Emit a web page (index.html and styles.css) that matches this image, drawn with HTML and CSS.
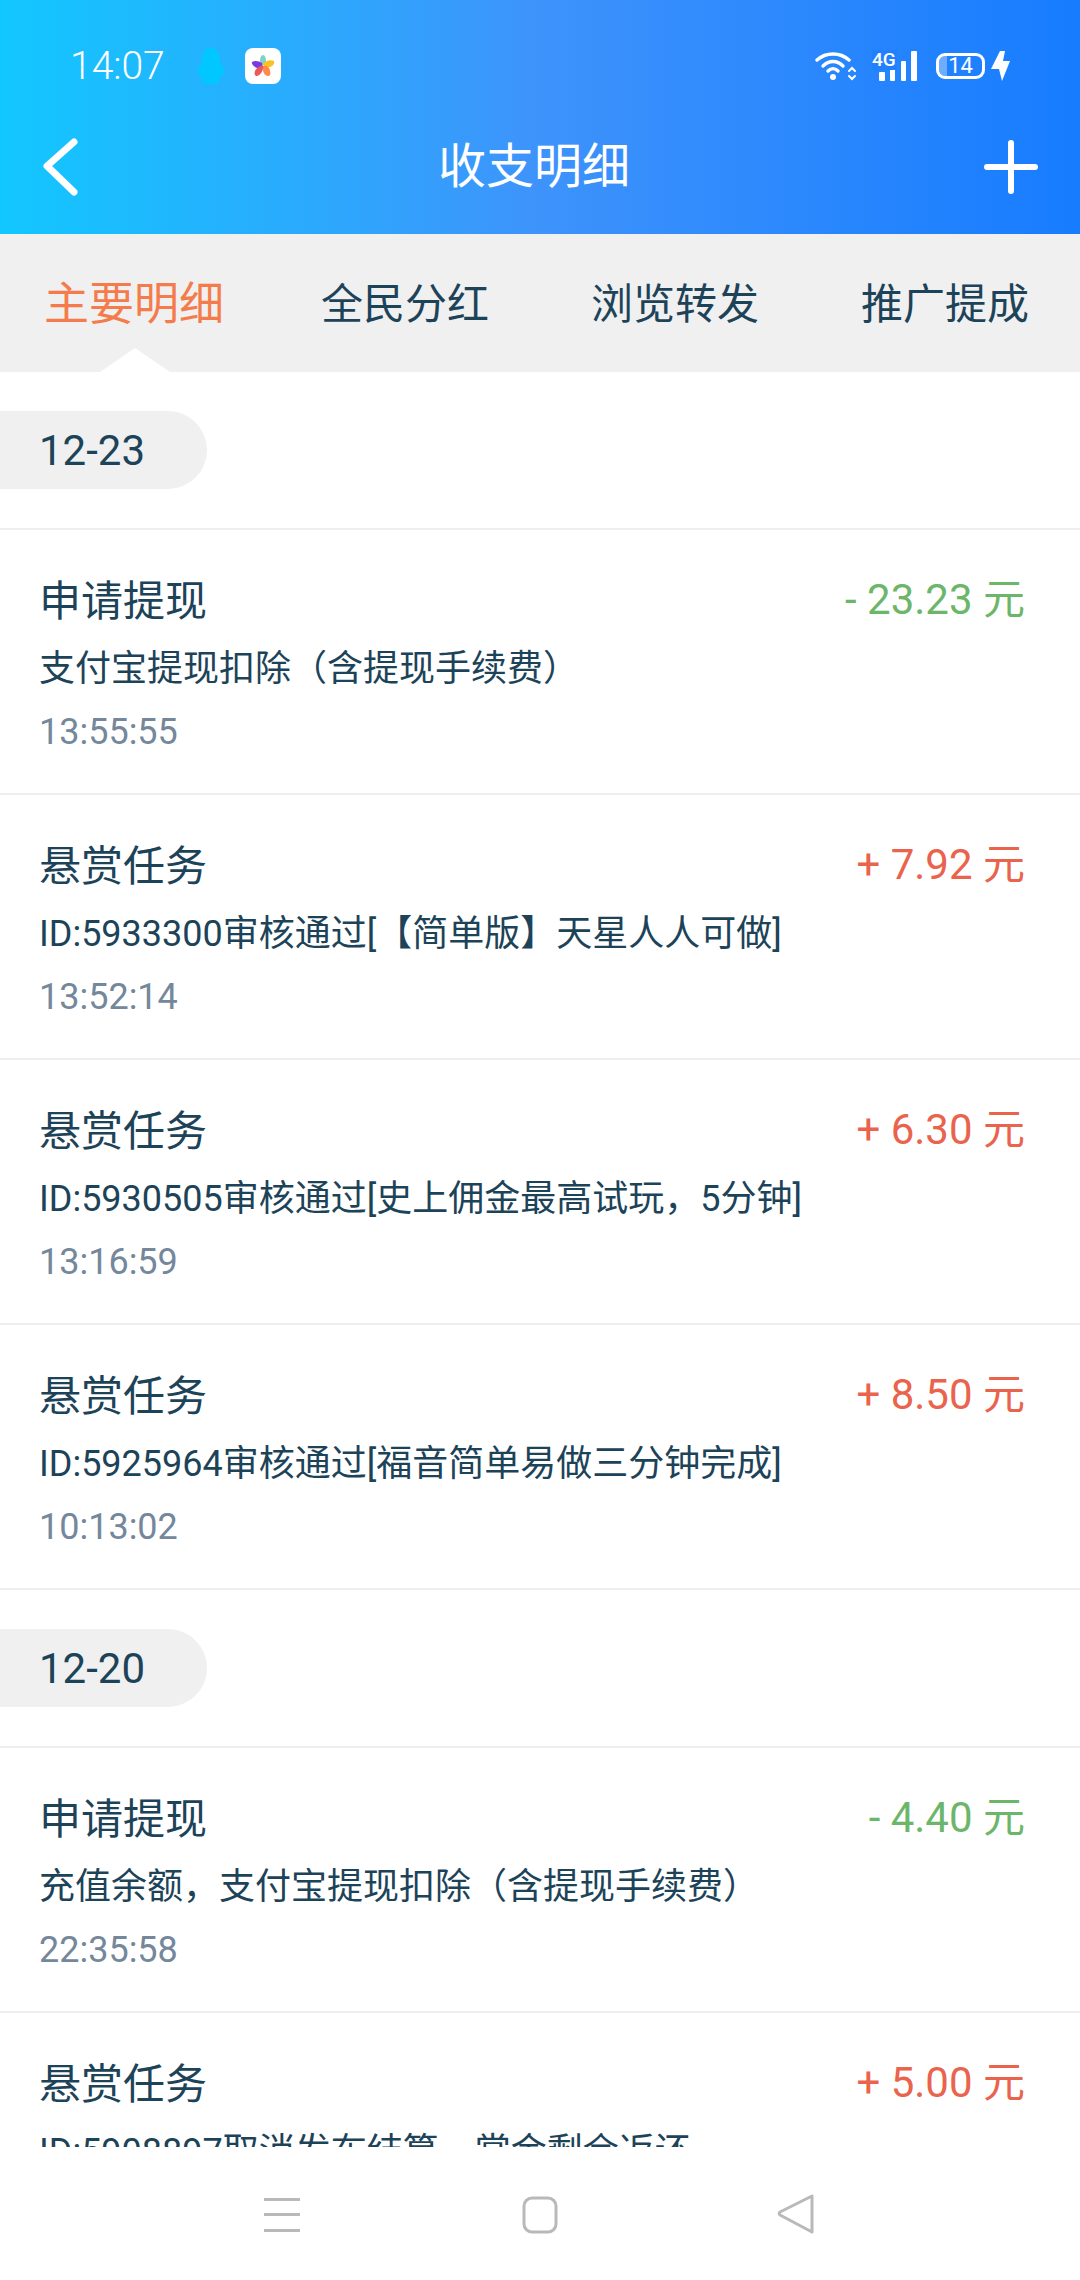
FILE: index.html
```html
<!DOCTYPE html>
<html lang="zh-CN">
<head>
    <meta charset="UTF-8">
    <meta name="viewport" content="width=device-width, initial-scale=1.0">
    <title>收支明细</title>
    <link rel="stylesheet" href="styles.css">
</head>
<body>
<div class="app">

    <div class="header">
        <div class="status">
            <span class="clock">14:07</span>
            <svg class="qq" width="28" height="36" viewBox="0 0 28 36"><path d="M14 0C8 0 5 5 5 12C5 15 3 18 1 21C0 24 1 27 4 27C5 31 6 36 9 36H19C22 36 23 31 24 27C27 27 28 24 27 21C25 18 23 15 23 12C23 5 20 0 14 0Z" fill="#00c8ff"/></svg>
            <svg class="appicon" width="36" height="36" viewBox="0 0 36 36">
                <rect width="36" height="36" rx="8" fill="#fff"/>
                <path d="M18 7C20 7 21 10 21 13C21 16 20 17 18 17C16 17 15 16 15 13C15 10 16 7 18 7Z" fill="#7ed3c8"/>
                <path d="M7 14C10 12 14 13 17 15C18 18 15 21 12 20C9 19 6 16 7 14Z" fill="#7c3be0"/>
                <path d="M29 13C30 15 28 18 25 19C22 20 19 18 18 16C20 13 26 11 29 13Z" fill="#ffc01f"/>
                <path d="M18 18C21 17 25 19 25 23C26 26 25 28 23 28C20 28 17 24 18 18Z" fill="#ff8a4a"/>
                <path d="M18 17C19 21 16 27 12 28C10 28 9 26 10 23C11 20 15 18 18 17Z" fill="#ea5a5a"/>
            </svg>
            <div class="status-right">
                <svg width="42" height="30" viewBox="0 0 42 30" fill="none" stroke="#fff" stroke-width="3.4" stroke-linecap="round">
                    <path d="M2 9C11 1 25 1 34 9"/>
                    <path d="M8 15C14 9 22 9 28 15"/>
                    <path d="M13 20C16 17 20 17 23 20"/>
                    <circle cx="18" cy="26" r="3" fill="#fff" stroke="none"/>
                    <path d="M34 20L37 17L40 20M34 25L37 28L40 25" stroke-width="2"/>
                </svg>
                <div class="signal">
                    <span class="net">4G</span>
                    <svg width="38" height="30" viewBox="0 0 38 30" fill="#fff">
                        <rect x="0" y="21" width="6" height="9" rx="1"/>
                        <rect x="11" y="18" width="5" height="12" rx="1"/>
                        <rect x="22" y="10" width="5" height="20" rx="1"/>
                        <rect x="32" y="0" width="6" height="30" rx="1"/>
                    </svg>
                </div>
                <div class="battery">
                    <span class="battery-fill"></span>
                    <span class="battery-num">14</span>
                </div>
                <svg class="bolt" width="20" height="30" viewBox="0 0 20 30"><path d="M9 0L0 18H8L11 30L19 10H12L14 0Z" fill="#fff"/></svg>
            </div>
        </div>
        <div class="titlebar">
            <svg width="38" height="60" viewBox="0 0 38 60" fill="none" stroke="#fff" stroke-width="7" stroke-linecap="round" stroke-linejoin="round"><path d="M32 5L5 29L32 55"/></svg>
            <div class="title">收支明细</div>
            <svg class="plus" width="54" height="54" viewBox="0 0 54 54" stroke="#fff" stroke-width="6" stroke-linecap="round"><path d="M27 3V51M3 27H51"/></svg>
        </div>
    </div>

    <div class="tabs">
        <div class="tab active">主要明细</div>
        <div class="tab">全民分红</div>
        <div class="tab">浏览转发</div>
        <div class="tab">推广提成</div>
    </div>

    <div class="list">
        <div class="datebar"><span class="date">12-23</span></div>

        <div class="row">
            <div class="info">
                <div class="name">申请提现</div>
                <div class="desc">支付宝提现扣除（含提现手续费）</div>
                <div class="time">13:55:55</div>
            </div>
            <div class="amount minus">- 23.23 元</div>
        </div>
        <div class="row">
            <div class="info">
                <div class="name">悬赏任务</div>
                <div class="desc">ID:5933300审核通过[【简单版】天星人人可做]</div>
                <div class="time">13:52:14</div>
            </div>
            <div class="amount plus-money">+ 7.92 元</div>
        </div>
        <div class="row">
            <div class="info">
                <div class="name">悬赏任务</div>
                <div class="desc">ID:5930505审核通过[史上佣金最高试玩，5分钟]</div>
                <div class="time">13:16:59</div>
            </div>
            <div class="amount plus-money">+ 6.30 元</div>
        </div>
        <div class="row">
            <div class="info">
                <div class="name">悬赏任务</div>
                <div class="desc">ID:5925964审核通过[福音简单易做三分钟完成]</div>
                <div class="time">10:13:02</div>
            </div>
            <div class="amount plus-money">+ 8.50 元</div>
        </div>

        <div class="datebar"><span class="date">12-20</span></div>

        <div class="row">
            <div class="info">
                <div class="name">申请提现</div>
                <div class="desc">充值余额，支付宝提现扣除（含提现手续费）</div>
                <div class="time">22:35:58</div>
            </div>
            <div class="amount minus">- 4.40 元</div>
        </div>
        <div class="row">
            <div class="info">
                <div class="name">悬赏任务</div>
                <div class="desc">ID:5908897取消发布结算，赏金剩余返还</div>
            </div>
            <div class="amount plus-money">+ 5.00 元</div>
        </div>
    </div>

    <div class="navbar">
        <svg width="36" height="34" viewBox="0 0 36 34" fill="#b9b9b9"><rect y="0" width="36" height="3"/><rect y="15" width="36" height="3"/><rect y="31" width="36" height="3"/></svg>
        <svg width="36" height="38" viewBox="0 0 36 38" fill="none" stroke="#b9b9b9" stroke-width="3"><rect x="2" y="2" width="32" height="34" rx="8"/></svg>
        <svg width="38" height="40" viewBox="0 0 38 40" fill="none" stroke="#b9b9b9" stroke-width="3" stroke-linejoin="round"><path d="M35 2V38L3 21C2 20 2 19 3 18Z"/></svg>
    </div>

</div>
</body>
</html>
```

FILE: styles.css
```css
*
{
    box-sizing: border-box;
}

body
{
    margin: 0px;
    background: #fff;
    font-family: Roboto, "Noto Sans CJK SC", sans-serif;
    color: #1d4359;
    text-spacing-trim: space-all;
}

.app
{
    width: 1080px;
    height: 2280px;
    display: flex;
    flex-direction: column;
    overflow: hidden;
}

/* top blue part */
.header
{
    height: 234px;
    flex: none;
    background: linear-gradient(90deg, #12c7ff 0%, #3e93fb 50%, #177cff 100%);
    color: #fff;
}

.status
{
    height: 100px;
    padding: 32px 69px 0px 70px;
    display: flex;
    align-items: center;
}

.clock
{
    font-size: 39px;
    font-weight: 300;
    width: 94px;
}

.qq
{
    margin-left: 33px;
}

.appicon
{
    margin-left: 20px;
}

.status-right
{
    margin-left: auto;
    display: flex;
    align-items: center;
}

.signal
{
    position: relative;
    width: 38px;
    height: 30px;
    margin-left: 22px;
}

.net
{
    position: absolute;
    left: -7px;
    top: -1px;
    font-size: 19px;
    line-height: 20px;
    font-weight: 500;
    background: #2080fe;
    padding-right: 1px;
}

.signal svg
{
    display: block;
}

.battery
{
    position: relative;
    width: 49px;
    height: 26px;
    margin-left: 19px;
    border: 3px solid #fff;
    border-radius: 9px;
    overflow: hidden;
    text-align: center;
}

.battery-fill
{
    position: absolute;
    left: 0px;
    top: 0px;
    width: 8px;
    height: 100%;
    background: rgba(255, 255, 255, 0.35);
}

.battery-num
{
    position: relative;
    display: block;
    font-size: 22px;
    line-height: 20px;
}

.bolt
{
    margin-left: 6px;
}

.titlebar
{
    height: 134px;
    padding: 0px 42px;
    display: grid;
    grid-template-columns: 1fr auto 1fr;
    align-items: center;
}

.title
{
    font-size: 48px;
    line-height: 60px;
    margin-right: 12px;
}

.plus
{
    justify-self: end;
}

/* tabs */
.tabs
{
    position: relative;
    height: 138px;
    flex: none;
    background: #f0f0f0;
    display: grid;
    grid-template-columns: repeat(4, 1fr);
}

.tab
{
    font-size: 42px;
    text-align: center;
    line-height: 142px;
}

.tab.active
{
    font-size: 45px;
    padding-right: 2px;
    color: #f47c4c;
}

.tab.active::after
{
    content: "";
    position: absolute;
    left: 100px;
    bottom: 0px;
    width: 70px;
    height: 24px;
    background: #fff;
    clip-path: polygon(0 100%, 50% 0, 100% 100%);
}

/* list */
.list
{
    flex: 1;
    overflow: hidden;
}

.datebar
{
    padding: 39px 0px;
    border-bottom: 2px solid #eeeeee;
}

.date
{
    display: block;
    width: 207px;
    height: 78px;
    padding-left: 39px;
    font-size: 42px;
    line-height: 80px;
    background: #f0f0f0;
    border-radius: 0px 39px 39px 0px;
}

.row
{
    display: flex;
    justify-content: space-between;
    padding: 40px 55px 36px 39px;
    border-bottom: 2px solid #eeeeee;
}

.info
{
    padding-top: 2px;
}

.name
{
    font-size: 42px;
    line-height: 60px;
}

.desc
{
    font-size: 36px;
    line-height: 50px;
    margin-top: 12px;
}

.time
{
    font-size: 36px;
    line-height: 50px;
    margin-top: 13px;
    color: #74879b;
}

.amount
{
    font-size: 42px;
    line-height: 60px;
}

.minus
{
    color: #6cb66a;
}

.plus-money
{
    color: #e9634d;
}

/* bottom system bar */
.navbar
{
    height: 133px;
    flex: none;
    background: #fff;
    position: relative;
}

.navbar svg
{
    position: absolute;
    top: 49px;
}

.navbar svg:nth-child(1)
{
    left: 264px;
    top: 51px;
}

.navbar svg:nth-child(2)
{
    left: 522px;
}

.navbar svg:nth-child(3)
{
    left: 777px;
    top: 47px;
}
```
